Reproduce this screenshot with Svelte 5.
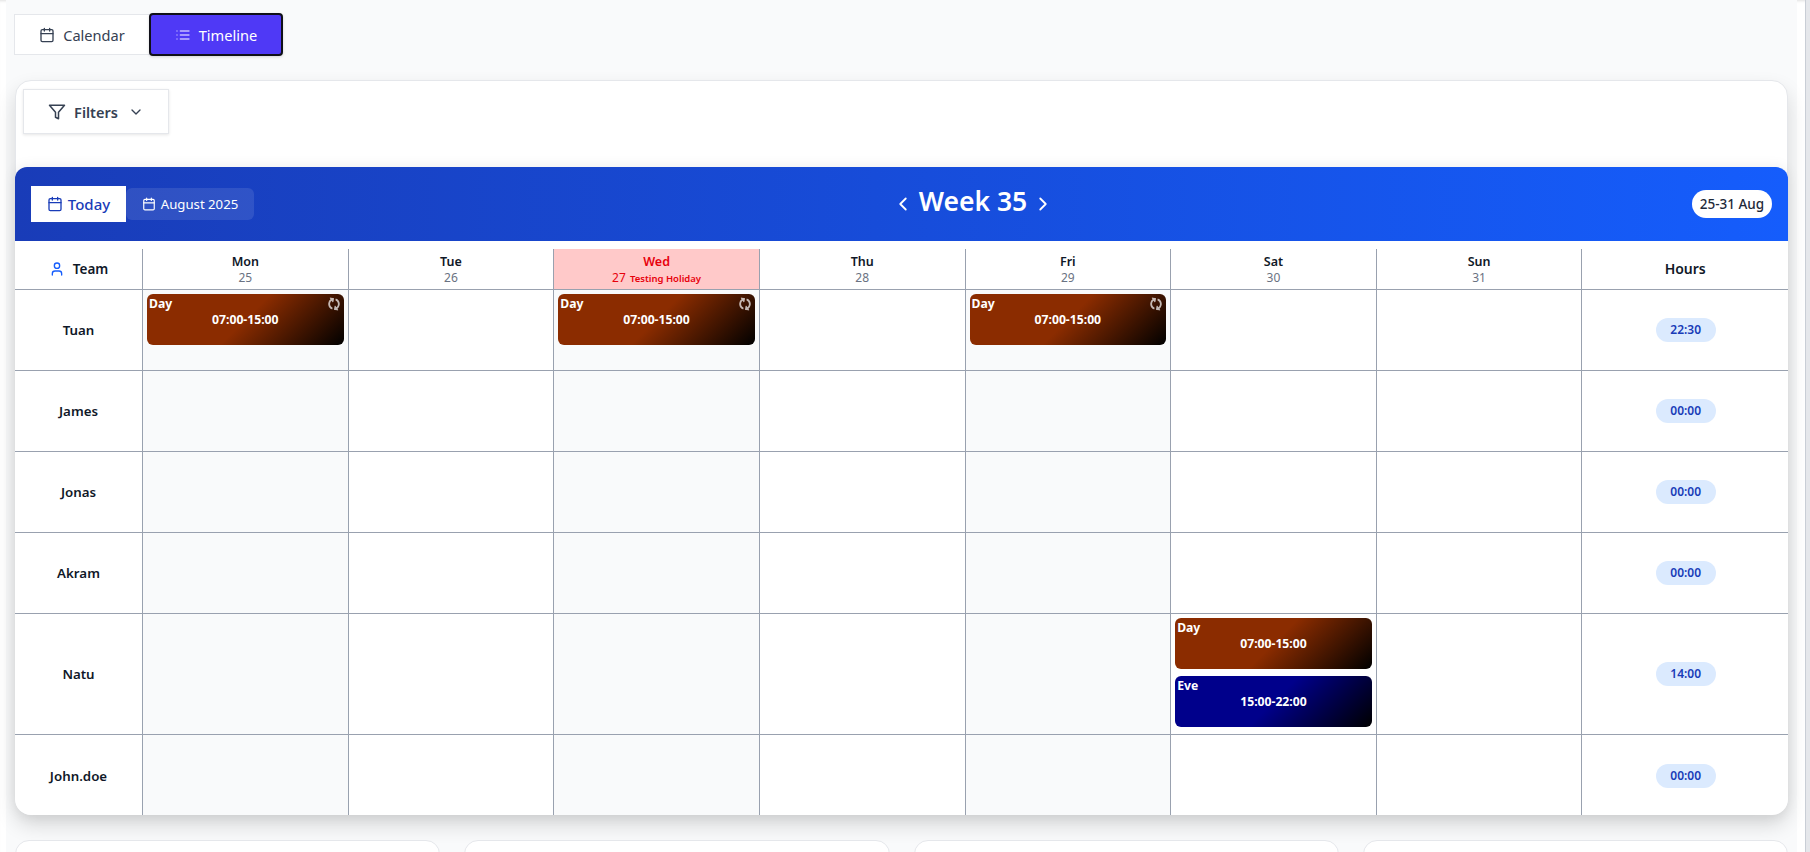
<script>
  const days = [
    { name: "Mon", num: 25, shade: true },
    { name: "Tue", num: 26 },
    { name: "Wed", num: 27, shade: true, holiday: "Testing Holiday" },
    { name: "Thu", num: 28 },
    { name: "Fri", num: 29, shade: true },
    { name: "Sat", num: 30 },
    { name: "Sun", num: 31 }
  ];

  const day = { label: "Day", time: "07:00-15:00", kind: "day" };
  const eve = { label: "Eve", time: "15:00-22:00", kind: "eve" };

  // shifts are keyed by the day's index in the week
  const team = [
    { name: "Tuan", hours: "22:30", repeat: true, shifts: { 0: [day], 2: [day], 4: [day] } },
    { name: "James", hours: "00:00", shifts: {} },
    { name: "Jonas", hours: "00:00", shifts: {} },
    { name: "Akram", hours: "00:00", shifts: {} },
    { name: "Natu", hours: "14:00", tall: true, shifts: { 5: [day, eve] } },
    { name: "John.doe", hours: "00:00", shifts: {} }
  ];
</script>

<div class="shell">
  <main class="page">
    <div class="tabs">
      <button class="tab">
        <svg class="ico" width="16" height="16" viewBox="0 0 24 24"><path d="M8 2v4M16 2v4" /><rect x="3" y="4" width="18" height="18" rx="2" /><path d="M3 10h18" /></svg>
        Calendar
      </button>
      <button class="tab active">
        <svg class="ico" width="16" height="16" viewBox="0 0 24 24"><path d="M3 6h.01M3 12h.01M3 18h.01M8 6h13M8 12h13M8 18h13" /></svg>
        Timeline
      </button>
    </div>

    <section class="card">
      <div class="filter-bar">
        <button class="filters">
          <svg class="ico" width="18" height="18" viewBox="0 0 24 24"><path d="M22 3H2l8 9.46V19l4 2v-8.54L22 3z" /></svg>
          Filters
          <svg class="ico chevron" width="16" height="16" viewBox="0 0 24 24"><path d="m6 9 6 6 6-6" /></svg>
        </button>
      </div>

      <div class="schedule">
        <header class="banner">
          <div class="banner-left">
            <button class="today">
              <svg class="ico" width="16" height="16" viewBox="0 0 24 24"><path d="M8 2v4M16 2v4" /><rect x="3" y="4" width="18" height="18" rx="2" /><path d="M3 10h18" /></svg>
              Today
            </button>
            <button class="month">
              <svg class="ico" width="14" height="14" viewBox="0 0 24 24"><path d="M8 2v4M16 2v4" /><rect x="3" y="4" width="18" height="18" rx="2" /><path d="M3 10h18" /></svg>
              August 2025
            </button>
          </div>
          <div class="week">
            <svg class="ico" width="22" height="22" viewBox="0 0 24 24"><path d="m15 18-6-6 6-6" /></svg>
            <span>Week 35</span>
            <svg class="ico" width="22" height="22" viewBox="0 0 24 24"><path d="m9 18 6-6-6-6" /></svg>
          </div>
          <div class="range">25-31 Aug</div>
        </header>

        <div class="grid">
          <div class="head first">
            <svg class="ico person" width="16" height="16" viewBox="0 0 24 24"><path d="M19 21v-2a4 4 0 0 0-4-4H9a4 4 0 0 0-4 4v2" /><circle cx="12" cy="7" r="4" /></svg>
            Team
          </div>
          {#each days as d}
            <div class="head line" class:holiday={d.holiday}>
              <div class="day-name">{d.name}</div>
              <div class="day-num">
                {d.num}
                {#if d.holiday}<span class="holiday-name">{d.holiday}</span>{/if}
              </div>
            </div>
          {/each}
          <div class="head line hours-head">Hours</div>

          {#each team as member}
            <div class="name" class:tall={member.tall}>{member.name}</div>
            {#each days as d, i}
              <div class="cell line" class:shade={d.shade}>
                {#each member.shifts[i] ?? [] as shift}
                  <div class="shift {shift.kind}">
                    <span class="shift-label">{shift.label}</span>
                    <span class="shift-time">{shift.time}</span>
                    {#if member.repeat}
                      <svg class="repeat" width="12" height="12" viewBox="0 0 512 512"><path d="M370.72 133.28C339.458 104.008 298.888 87.962 255.848 88c-77.458.068-144.328 53.178-162.791 126.85-1.344 5.363-6.122 9.15-11.651 9.15H24.103c-7.498 0-13.194-6.807-11.807-14.176C33.933 94.924 134.813 8 256 8c66.448 0 126.791 26.136 171.315 68.685L463.03 40.97C478.149 25.851 504 36.559 504 57.941V192c0 13.255-10.745 24-24 24H345.941c-21.382 0-32.09-25.851-16.971-40.971l41.75-41.749zM32 296h134.059c21.382 0 32.09 25.851 16.971 40.971l-41.75 41.75c31.262 29.273 71.835 45.319 114.876 45.28 77.418-.07 144.315-53.144 162.787-126.849 1.344-5.363 6.122-9.15 11.651-9.15h57.304c7.498 0 13.194 6.807 11.807 14.176C478.067 417.076 377.187 504 256 504c-66.448 0-126.791-26.136-171.315-68.685L48.97 471.03C33.851 486.149 8 475.441 8 454.059V320c0-13.255 10.745-24 24-24z" /></svg>
                    {/if}
                  </div>
                {/each}
              </div>
            {/each}
            <div class="cell line total"><span class="pill">{member.hours}</span></div>
          {/each}
        </div>
      </div>
    </section>

    <div class="stats">
      <div class="stat"></div>
      <div class="stat"></div>
      <div class="stat"></div>
      <div class="stat"></div>
    </div>
  </main>
  <aside class="rail"></aside>
</div>

<style>
  :global(body) {
    background: #fff;
    font-family: "Noto Sans", "Open Sans", sans-serif;
    overflow: hidden;
  }

  .shell {
    height: 852px;
    overflow: hidden;
    display: flex;
    padding-left: 6px;
    box-shadow: inset 0 3px 3px -2px rgba(0, 0, 0, 0.12);
  }

  .page {
    width: 1791px;
    flex: none;
    background: #f9fafb;
    padding: 14px 9px 0 9px;
    box-sizing: border-box;
  }

  .rail {
    margin-left: 8px;
    flex: 1;
    background: #e5e7eb;
    border-left: 1px solid #c9ced6;
  }

  .ico {
    fill: none;
    stroke: currentColor;
    stroke-width: 2;
    stroke-linecap: round;
    stroke-linejoin: round;
    flex: none;
  }

  button {
    font: inherit;
    display: flex;
    align-items: center;
    cursor: pointer;
  }

  .tabs {
    display: flex;
    height: 42px;
    align-items: flex-start;
  }

  .tab {
    height: 41px;
    width: 136px;
    justify-content: center;
    gap: 8px;
    background: #fff;
    border: 1px solid #e5e7eb;
    color: #364153;
    font-size: 14.6px;
    padding: 0;
    margin-left: -1px;
  }

  .tab.active {
    width: 134px;
    height: 43px;
    margin-left: -1px;
    margin-top: -1px;
    background: #4f39f6;
    border: 2px solid #101018;
    border-radius: 4px;
    color: #fff;
    box-shadow: 0 1px 3px rgba(0, 0, 0, 0.15);
  }

  .tab.active .ico {
    color: #c6bcff;
  }

  .card {
    margin-top: 24px;
    height: 735px;
    background: #fff;
    border: 1px solid #e5e7eb;
    border-radius: 16px;
    box-sizing: border-box;
    box-shadow: 0 10px 20px rgba(0, 0, 0, 0.14);
    display: flex;
    flex-direction: column;
  }

  .filter-bar {
    padding: 8px 7px;
    height: 86px;
    box-sizing: border-box;
    flex: none;
  }

  .filters {
    width: 146px;
    height: 45px;
    justify-content: center;
    gap: 8px;
    padding: 0;
    background: #fff;
    border: 1px solid #e5e7eb;
    box-shadow: 0 1px 3px rgba(0, 0, 0, 0.1);
    color: #364153;
    font-size: 14.5px;
    font-weight: 600;
  }

  .chevron {
    margin-left: 2px;
  }

  .schedule {
    margin: 0 -1px -1px;
    flex: 1;
    border-radius: 12px 12px 16px 16px;
    overflow: hidden;
    box-shadow: 0 0 14px rgba(0, 0, 0, 0.08);
  }

  .banner {
    height: 74px;
    background: linear-gradient(to right, #193cb8, #155dfc);
    display: flex;
    justify-content: space-between;
    align-items: center;
    padding: 0 16px;
    color: #fff;
  }

  .banner-left {
    display: flex;
    align-items: center;
  }

  .today {
    width: 95px;
    height: 36px;
    justify-content: center;
    gap: 5px;
    padding: 0;
    border: 0;
    background: #fff;
    color: #193cb8;
    font-size: 15px;
    font-weight: 500;
  }

  .month {
    width: 128px;
    height: 32px;
    justify-content: center;
    gap: 5px;
    padding: 0;
    border: 0;
    border-radius: 6px;
    background: rgba(255, 255, 255, 0.1);
    color: #fff;
    font-size: 13.2px;
  }

  .week {
    display: flex;
    align-items: center;
    gap: 5px;
    font-size: 26.5px;
    font-weight: 600;
  }

  .week span {
    margin-bottom: 6px;
  }

  .range {
    height: 28px;
    line-height: 28px;
    width: 80px;
    text-align: center;
    border-radius: 14px;
    background: #fff;
    color: #1e2939;
    font-size: 13.5px;
    font-weight: 500;
  }

  .grid {
    display: grid;
    grid-template-columns: 127px repeat(7, minmax(0, 1fr)) 206.6px;
    padding-top: 8px;
    background: #fff;
  }

  .head {
    height: 41px;
    box-sizing: border-box;
    padding-top: 2px;
    border-bottom: 1px solid #99a1af;
    display: flex;
    flex-direction: column;
    align-items: center;
    justify-content: center;
    color: #101828;
    font-size: 12.5px;
    font-weight: 600;
    line-height: 16px;
  }

  .line {
    border-left: 1px solid #99a1af;
  }

  .first {
    flex-direction: row;
    gap: 8px;
    font-size: 13.5px;
    padding-top: 0;
  }

  .person {
    color: #155dfc;
  }

  .day-num {
    color: #6a7282;
    font-size: 12px;
    font-weight: 400;
  }

  .holiday {
    background: #ffc9c9;
    color: #e7000b;
  }

  .holiday .day-num {
    color: #e7000b;
  }

  .holiday-name {
    font-size: 9.5px;
    font-weight: 600;
    margin-left: 1px;
  }

  .hours-head {
    font-size: 14px;
    padding-top: 0;
  }

  .name {
    height: 81px;
    box-sizing: border-box;
    border-bottom: 1px solid #99a1af;
    display: flex;
    align-items: center;
    justify-content: center;
    color: #101828;
    font-size: 13.3px;
    font-weight: 600;
  }

  .name.tall {
    height: 121px;
  }

  .cell {
    box-sizing: border-box;
    border-bottom: 1px solid #99a1af;
    padding: 4px;
    display: flex;
    flex-direction: column;
    gap: 7px;
  }

  .cell.shade {
    background: #f9fafb;
  }

  .grid > :nth-last-child(-n + 9) {
    border-bottom: 0;
  }

  .shift {
    position: relative;
    height: 51px;
    flex: none;
    border-radius: 6px;
    color: #fff;
    font-size: 12.2px;
    font-weight: 700;
    box-sizing: border-box;
    text-align: center;
    padding-top: 17px;
    line-height: 18px;
  }

  .shift.day {
    background: linear-gradient(135deg, #8b2c00 50%, #000);
  }

  .shift.eve {
    background: linear-gradient(135deg, #00008b 50%, #000);
  }

  .shift-label {
    position: absolute;
    left: 2px;
    top: 1px;
  }

  .repeat {
    position: absolute;
    right: 4px;
    top: 4px;
    fill: #fff;
    opacity: 0.7;
    transform: rotate(100deg);
  }

  .total {
    align-items: center;
    justify-content: center;
    padding-left: 5px;
  }

  .pill {
    width: 60px;
    height: 24px;
    line-height: 24px;
    border-radius: 12px;
    text-align: center;
    background: #dbeafe;
    color: #193cb8;
    font-size: 12px;
    font-weight: 600;
  }

  .stats {
    margin-top: 25px;
    display: grid;
    grid-template-columns: repeat(4, 1fr);
    gap: 24px;
  }

  .stat {
    height: 120px;
    background: #fff;
    border: 1px solid #e5e7eb;
    border-radius: 14px;
  }
</style>
